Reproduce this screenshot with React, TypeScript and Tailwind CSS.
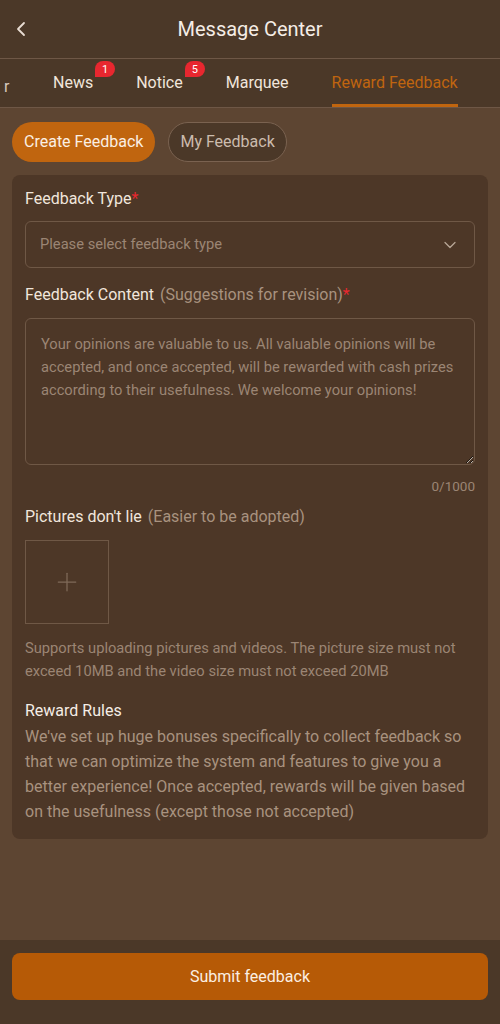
import React, { useState } from 'react';
import { ChevronLeft, ChevronDown, Plus } from 'lucide-react';

const tabs = [
  { label: 'News', badge: '1' },
  { label: 'Notice', badge: '5' },
  { label: 'Marquee' },
  { label: 'Reward Feedback', active: true },
];

const Badge: React.FC<{ n: string }> = ({ n }) => (
  <span className="absolute -top-[10px] -right-[22px] flex h-[16px] min-w-[20px] items-center justify-center rounded-[8px] rounded-bl-none bg-[#e8272f] px-1 text-[11px] leading-none text-white">
    {n}
  </span>
);

export default function App() {
  const [mode, setMode] = useState<'create' | 'mine'>('create');
  const [content, setContent] = useState('');

  return (
    <div className="flex h-[1024px] w-[500px] flex-col bg-[#5d4532] font-['Roboto',sans-serif] text-[#f1e6dc]">
      {/* Header */}
      <div className="relative flex h-[59px] items-center justify-center border-b border-[#6e5746] bg-[#4b3828]">
        <button className="absolute left-[9px] top-[17px] text-[#e9ddd3]">
          <ChevronLeft size={24} strokeWidth={1.8} />
        </button>
        <h1 className="text-[20px] text-[#f5ede6]">Message Center</h1>
      </div>

      {/* Tabs */}
      <div className="relative flex h-[49px] items-end border-b border-[#6e5746] bg-[#4b3828]">
        <span className="absolute left-[4px] top-[16px] text-[16px] text-[#d8cabe]">r</span>
        <div className="ml-[53px] flex items-end gap-[43px]">
          {tabs.map((t) => (
            <div key={t.label} className="relative flex flex-col items-center">
              <span className={`relative pb-[9px] text-[16px] ${t.active ? 'text-[#c0650f]' : 'text-[#f1e6dc]'}`}>
                {t.label}
                {t.badge && <Badge n={t.badge} />}
              </span>
              <span className={`h-[3px] w-full ${t.active ? 'bg-[#c0650f]' : 'bg-transparent'}`} />
            </div>
          ))}
        </div>
      </div>

      {/* Body */}
      <div className="flex-1 px-[12px] pt-[14px]">
        <div className="flex gap-[13px]">
          <button
            onClick={() => setMode('create')}
            className={`h-[40px] rounded-full px-[12px] text-[16px] ${mode === 'create' ? 'bg-[#c0650f] text-[#fbefe3]' : 'border border-[#7a6250] bg-[#4b3828] text-[#cbbcae]'}`}
          >
            Create Feedback
          </button>
          <button
            onClick={() => setMode('mine')}
            className={`h-[40px] rounded-full px-[11px] text-[16px] ${mode === 'mine' ? 'bg-[#c0650f] text-[#fbefe3]' : 'border border-[#7a6250] bg-[#4b3828] text-[#cbbcae]'}`}
          >
            My Feedback
          </button>
        </div>

        <div className="mt-[13px] rounded-[8px] bg-[#4d3727] px-[13px] pb-[15px] pt-[13px]">
          <div className="text-[16px] leading-[22px]">
            Feedback Type<span className="text-[#e8272f]">*</span>
          </div>
          <div className="mt-[11px] flex h-[47px] items-center justify-between rounded-[6px] border border-[#6f5846] pl-[14px] pr-[14px]">
            <span className="text-[14.7px] text-[#9b8574]">Please select feedback type</span>
            <ChevronDown size={20} strokeWidth={1.5} className="text-[#b8a796]" />
          </div>

          <div className="mt-[16px] text-[16px] leading-[22px]">
            Feedback Content{' '}
            <span className="ml-[2px] text-[#a8927f]">(Suggestions for revision)</span>
            <span className="text-[#e8272f]">*</span>
          </div>
          <textarea
            value={content}
            onChange={(e) => setContent(e.target.value)}
            placeholder="Your opinions are valuable to us. All valuable opinions will be accepted, and once accepted, will be rewarded with cash prizes according to their usefulness. We welcome your opinions!"
            className="mt-[12px] block h-[147px] w-full resize-y rounded-[6px] border border-[#6f5846] bg-transparent px-[15px] pb-[12px] pt-[14px] text-[14.7px] leading-[23px] text-[#f1e6dc] outline-none placeholder:text-[#9b8574]"
          />
          <div className="mt-[11px] text-right text-[13.5px] text-[#9b8574]">{content.length}/1000</div>

          <div className="mt-[10px] text-[16px] leading-[22px]">
            Pictures don't lie <span className="ml-[2px] text-[#a8927f]">(Easier to be adopted)</span>
          </div>
          <div className="mt-[12px] flex h-[84px] w-[84px] items-center justify-center border border-[#6f5846]">
            <Plus size={30} strokeWidth={1} className="text-[#7f6a59]" />
          </div>
          <p className="mt-[13px] text-[14.7px] leading-[23px] text-[#9b8574]">
            Supports uploading pictures and videos. The picture size must not exceed 10MB and the video size must not exceed 20MB
          </p>

          <div className="mt-[17px] text-[16px] leading-[22px] text-[#f5ede6]">Reward Rules</div>
          <p className="mt-[2px] text-[16px] leading-[25px] text-[#a8927f]">
            We've set up huge bonuses specifically to collect feedback so that we can optimize the system and features to give you a better experience! Once accepted, rewards will be given based on the usefulness (except those not accepted)
          </p>
        </div>
      </div>

      {/* Footer */}
      <div className="flex h-[84px] items-start bg-[#4b3828] px-[12px] pt-[13px]">
        <button className="h-[47px] w-full rounded-[8px] bg-[#b65a06] text-[16px] text-[#fbefe3]">
          Submit feedback
        </button>
      </div>
    </div>
  );
}
